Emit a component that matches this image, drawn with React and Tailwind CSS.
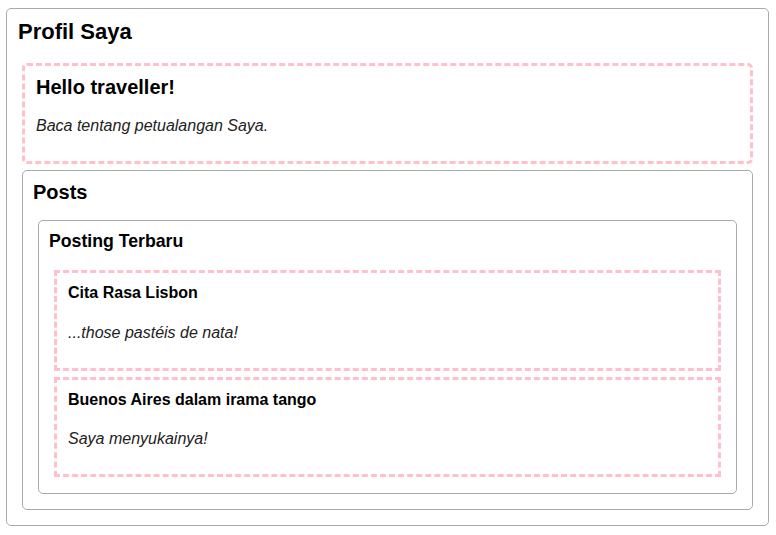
export default function App() {
  const font = { fontFamily: '"Liberation Sans", Arial, sans-serif' };
  return (
    <div style={font} className="w-[776px] h-[535px] bg-white overflow-hidden">
      <div className="ml-[6px] mt-[8px] w-[763px] h-[518px] border border-[#aaaaaa] rounded-[5px] px-[15px] pt-[10px]">
        <h2 className="ml-[-4px] text-[22px] leading-[25px] font-bold text-black">Profil Saya</h2>
        <div className="mt-[19px] h-[101px] border-[3px] border-dashed border-[#ffc0cb] rounded-[5px] px-[11px] pt-[10px]">
          <h3 className="text-[20px] leading-[23px] font-bold text-black">Hello traveller!</h3>
          <p className="mt-[18px] text-[16px] leading-[18px] italic text-[#222]">Baca tentang petualangan Saya.</p>
        </div>
        <div className="mt-[6px] h-[340px] border border-[#aaaaaa] rounded-[5px] px-[15px] pt-[10px]">
          <h3 className="ml-[-5px] text-[20px] leading-[23px] font-bold text-black">Posts</h3>
          <div className="mt-[16px] h-[274px] border border-[#aaaaaa] rounded-[5px] px-[15px] pt-[10px]">
            <h4 className="ml-[-5px] text-[17.7px] leading-[20px] font-bold text-black">Posting Terbaru</h4>
            <div className="mt-[19px] flex flex-col gap-[6px]">
              <div className="h-[101px] border-[3px] border-dashed border-[#ffc0cb] px-[11px] pt-[11px]">
                <h5 className="text-[16px] leading-[18px] font-bold text-black">Cita Rasa Lisbon</h5>
                <p className="mt-[22px] text-[16px] leading-[18px] italic text-[#222]">...those pastéis de nata!</p>
              </div>
              <div className="h-[100px] border-[3px] border-dashed border-[#ffc0cb] px-[11px] pt-[11px]">
                <h5 className="text-[16px] leading-[18px] font-bold text-black">Buenos Aires dalam irama tango</h5>
                <p className="mt-[21px] text-[16px] leading-[18px] italic text-[#222]">Saya menyukainya!</p>
              </div>
            </div>
          </div>
        </div>
      </div>
    </div>
  );
}
